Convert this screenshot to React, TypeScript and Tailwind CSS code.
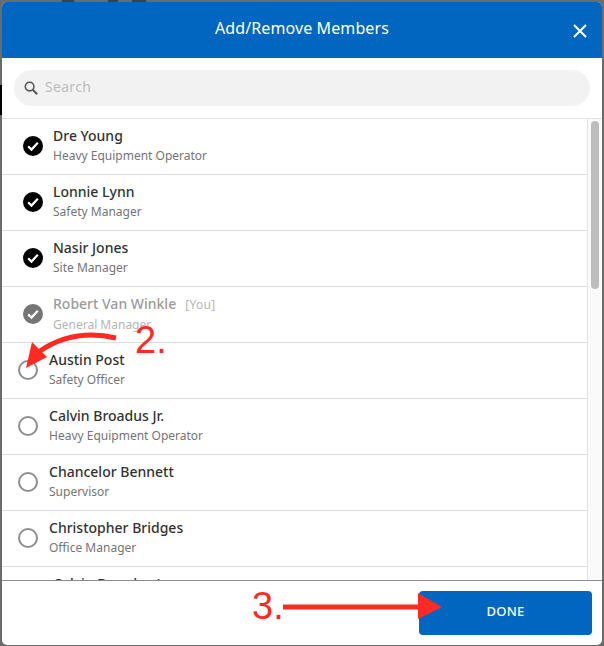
const members = [
  { name: "Dre Young", role: "Heavy Equipment Operator", state: "checked" },
  { name: "Lonnie Lynn", role: "Safety Manager", state: "checked" },
  { name: "Nasir Jones", role: "Site Manager", state: "checked" },
  { name: "Robert Van Winkle", role: "General Manager", state: "self" },
  { name: "Austin Post", role: "Safety Officer", state: "open" },
  { name: "Calvin Broadus Jr.", role: "Heavy Equipment Operator", state: "open" },
  { name: "Chancelor Bennett", role: "Supervisor", state: "open" },
  { name: "Christopher Bridges", role: "Office Manager", state: "open" },
  { name: "Calvin Broadus Jr.", role: "Heavy Equipment Operator", state: "checked" },
]

function Check({ muted }: { muted?: boolean }) {
  return (
    <svg width="20" height="20" viewBox="0 0 20 20" className="shrink-0">
      <circle cx="10" cy="10" r="10" fill={muted ? "#757575" : "#000000"} />
      <path d="M5.2 10.4l3.3 3.2 6.3-6.8" fill="none" stroke="#fff" strokeWidth="2.2" />
    </svg>
  )
}

function MemberRow({ name, role, state }: { name: string; role: string; state: string }) {
  const open = state === "open"
  const self = state === "self"
  return (
    <div className={`flex h-14 shrink-0 items-center border-b border-[#dedede] pb-[2px] ${open ? "pl-[16px] gap-[11px]" : "pl-[21px] gap-[10px]"}`}>
      {open ? (
        <div className="h-5 w-5 shrink-0 rounded-full border-2 border-[#8f8f8f]" />
      ) : (
        <Check muted={self} />
      )}
      <div className="flex flex-col">
        <div className="flex items-baseline gap-[9px]">
          <span className={`text-[14px] leading-5 font-medium ${self ? "text-[#9b9b9b]" : "text-[#333333]"}`}>{name}</span>
          {self && <span className="text-[12px] leading-5 tracking-[0.3px] text-[#b5b5b5]">[You]</span>}
        </div>
        <span className={`pt-px text-[12px] leading-[18px] ${self ? "text-[#b5b5b5]" : "text-[#757575]"}`}>{role}</span>
      </div>
    </div>
  )
}

export default function App() {
  return (
    <div className="relative h-[646px] w-[604px] overflow-hidden bg-[#6b6b6b] px-[2px] pt-[2px] pb-px font-['Noto_Sans',sans-serif]">
      {/* bits of the page behind the dialog */}
      <div className="absolute top-[85px] left-0 h-[30px] w-[2px] bg-black" />
      <div className="absolute top-0 left-[62px] h-[2px] w-[12px] bg-[#3f3f3f]" />
      <div className="absolute top-0 left-[108px] h-[2px] w-[10px] bg-[#3f3f3f]" />
      <div className="absolute top-0 left-[132px] h-[2px] w-[14px] bg-[#3f3f3f]" />

      <div className="relative flex h-full flex-col overflow-hidden rounded-[5px] bg-white">
        {/* Header */}
        <div className="relative flex h-14 shrink-0 items-center justify-center bg-[#0066c0]">
          <span className="-mt-[4px] text-[16px] tracking-[0.1px] text-white">Add/Remove Members</span>
          <svg width="14" height="14" viewBox="0 0 14 14" className="absolute top-[22px] right-[15px]">
            <path d="M1 1l12 12M13 1L1 13" stroke="#fff" strokeWidth="2" fill="none" />
          </svg>
        </div>

        {/* Search */}
        <div className="p-3">
          <div className="flex h-9 items-center gap-[7px] rounded-[18px] bg-[#f2f2f2] pl-[10px]">
            <svg width="14" height="14" viewBox="0 0 14 14">
              <circle cx="5.6" cy="5.6" r="4.3" fill="none" stroke="#555" strokeWidth="1.6" />
              <path d="M8.8 8.8l4.4 4.4" stroke="#555" strokeWidth="2" />
            </svg>
            <span className="-mt-[3px] text-[14px] tracking-[0.3px] text-[#bdbdbd]">Search</span>
          </div>
        </div>

        {/* Member list */}
        <div className="flex min-h-0 flex-1 border-t border-[#e3e3e3]">
          <div className="flex min-w-0 flex-1 flex-col overflow-hidden">
            {members.map((m, i) => (
              <MemberRow key={i} name={m.name} role={m.role} state={m.state} />
            ))}
          </div>
          <div className="w-[15px] shrink-0 border-l border-[#e3e3e3] bg-[#fafafa] pt-[2px] pl-[3px]">
            <div className="h-[168px] w-2 rounded-full bg-[#bdbdbd]" />
          </div>
        </div>

        {/* Footer */}
        <div className="flex h-[65px] shrink-0 items-center justify-end border-t border-[#8c8c8c] pr-[10px]">
          <button className="flex h-11 w-[173px] items-center justify-center rounded-[4px] bg-[#0066c0] pb-[2px] text-[13px] font-medium tracking-[0.2px] text-white">
            DONE
          </button>
        </div>
      </div>

      {/* Annotations */}
      <span className="absolute top-[318px] left-[135px] font-['Liberation_Sans',sans-serif] text-[38px] leading-[44px] text-[#ff2a22]">2.</span>
      <span className="absolute top-[584px] left-[252px] font-['Liberation_Sans',sans-serif] text-[38px] leading-[44px] text-[#ff2a22]">3.</span>
      <svg width="604" height="646" viewBox="0 0 604 646" className="pointer-events-none absolute top-0 left-0">
        <path d="M116 338C90 332 64 335 40 351" fill="none" stroke="#ff2a22" strokeWidth="5" />
        <path d="M32 342L47 357L26 368Z" fill="#ff2a22" />
        <path d="M283 607L420 607" fill="none" stroke="#ff2a22" strokeWidth="5" />
        <path d="M418 593L442 607L418 619Z" fill="#ff2a22" />
      </svg>
    </div>
  )
}
